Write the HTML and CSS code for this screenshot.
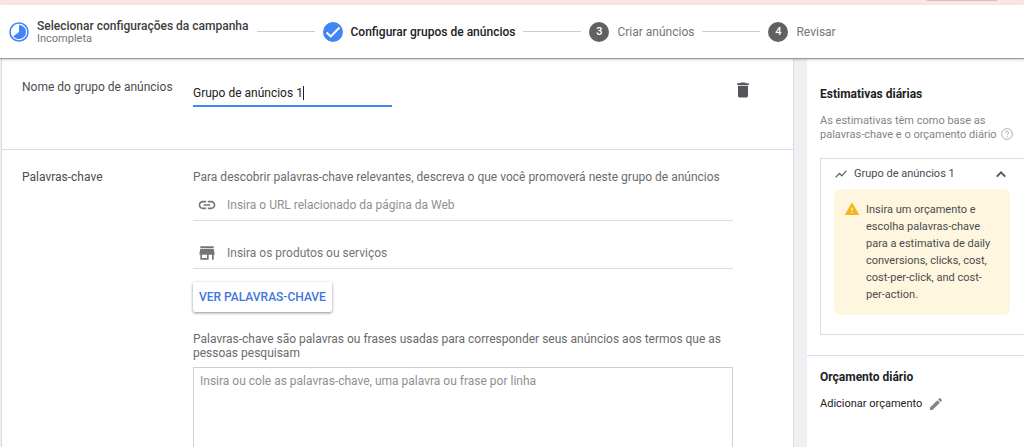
FILE: index.html
```html
<!DOCTYPE html>
<html lang="pt-BR">
<head>
  <meta charset="UTF-8" />
  <meta name="viewport" content="width=device-width, initial-scale=1.0"/>
  <title>Configurar grupos de anúncios</title>
  <link rel="stylesheet" href="styles.css">
</head>
<body>
  <div class="notice-bar"><span class="notice-action"></span></div>

  <header class="stepper">
    <div class="step">
      <svg class="step-icon" viewBox="0 0 20 20">
        <circle cx="10" cy="10" r="9" fill="none" stroke="#4285f4" stroke-width="1.6"/>
        <path d="M10 3a7 7 0 1 1-5.6 11.2L10 10z" fill="#4285f4"/>
      </svg>
      <div class="step-text">
        <strong class="step-title">Selecionar configurações da campanha</strong>
        <span class="step-status">Incompleta</span>
      </div>
    </div>
    <span class="step-line"></span>
    <div class="step">
      <svg class="step-icon" viewBox="0 0 20 20">
        <circle cx="10" cy="10" r="10" fill="#4285f4"/>
        <path d="M3.500 10.400l4.300 4 8.700-8.900" fill="none" stroke="#fff" stroke-width="2"/>
      </svg>
      <strong class="step-title current">Configurar grupos de anúncios</strong>
    </div>
    <span class="step-line"></span>
    <div class="step">
      <span class="step-icon step-number">3</span>
      <span class="step-title pending">Criar anúncios</span>
    </div>
    <span class="step-line"></span>
    <div class="step">
      <span class="step-icon step-number">4</span>
      <span class="step-title pending">Revisar</span>
    </div>
  </header>

  <div class="container">
    <main class="panel">
      <section class="row name-row">
        <label class="row-label" for="groupName">Nome do grupo de anúncios</label>
        <input class="group-name" type="text" id="groupName" value="Grupo de anúncios 1" />
        <button class="icon-button" type="button" aria-label="Excluir">
          <svg width="20" height="20" viewBox="0 0 24 24" fill="#55565b"><path d="M6 19c0 1.100.9 2 2 2h8c1.100 0 2-.9 2-2V7H6v12zM19 4h-3.500l-1-1h-5l-1 1H5v2h14V4z"/></svg>
        </button>
      </section>

      <section class="row keywords-row">
        <h2 class="row-label">Palavras-chave</h2>
        <div class="keywords">
          <p class="hint">Para descobrir palavras-chave relevantes, descreva o que você promoverá neste grupo de anúncios</p>
          <label class="field">
            <svg width="20" height="20" viewBox="0 0 24 24" fill="#757575"><path d="M3.900 12c0-1.710 1.390-3.100 3.100-3.100h4V7H7c-2.760 0-5 2.240-5 5s2.240 5 5 5h4v-1.900H7c-1.710 0-3.100-1.390-3.100-3.100zM8 13h8v-2H8v2zm9-6h-4v1.900h4c1.710 0 3.100 1.390 3.100 3.100s-1.390 3.100-3.100 3.100h-4V17h4c2.760 0 5-2.240 5-5s-2.240-5-5-5z"/></svg>
            <input class="light" type="text" placeholder="Insira o URL relacionado da página da Web" />
          </label>
          <label class="field">
            <svg width="20" height="20" viewBox="0 0 24 24" fill="#757575"><path d="M20 4H4v2h16V4zm1 10v-2l-1-5H4l-1 5v2h1v6h10v-6h4v6h2v-6h1zm-9 4H6v-4h6v4z"/></svg>
            <input type="text" placeholder="Insira os produtos ou serviços" />
          </label>
          <button class="keywords-button" type="button">VER PALAVRAS-CHAVE</button>
          <label class="hint" for="keywordList">Palavras-chave são palavras ou frases usadas para corresponder seus anúncios aos termos que as pessoas pesquisam</label>
          <textarea id="keywordList" placeholder="Insira ou cole as palavras-chave, uma palavra ou frase por linha"></textarea>
        </div>
      </section>
    </main>

    <aside class="sidebar">
      <section class="estimates">
        <h3>Estimativas diárias</h3>
        <p class="estimates-text">As estimativas têm como base as palavras-chave e o orçamento diário
          <svg class="help" width="12" height="12" viewBox="0 0 12 12" fill="none" stroke="#9e9e9e"><circle cx="6" cy="6" r="5.400" stroke-width=".8"/><path d="M4.400 4.800c0-2.200 3.200-2.100 3.200-.1 0 1.200-1.600 1.200-1.600 2.500M6 8.200v1" stroke-width=".9"/></svg>
        </p>
        <div class="card">
          <button class="card-header" type="button">
            <svg width="14" height="14" viewBox="0 0 24 24" fill="#55565b"><path d="M3.500 18.500l6-6 4 4L22 6.900l-1.400-1.400-7.100 8-4-4L2 17z"/></svg>
            <span>Grupo de anúncios 1</span>
            <svg class="chevron" width="18" height="18" viewBox="0 0 24 24" fill="#55565b"><path d="M12 8l-6.500 6.500 1.800 1.800 4.700-4.700 4.700 4.700 1.800-1.800z"/></svg>
          </button>
          <div class="warning">
            <svg width="16" height="16" viewBox="0 0 24 24" fill="#f4b61a"><path d="M1 21h22L12 2 1 21zm12-3h-2v-2h2v2zm0-4h-2v-4h2v4z"/></svg>
            <p>Insira um orçamento e escolha palavras-chave para a estimativa de daily conversions, clicks, cost, cost-per-click, and cost-per-action.</p>
          </div>
        </div>
      </section>
      <section class="budget">
        <h3>Orçamento diário</h3>
        <button class="budget-button" type="button">
          <span>Adicionar orçamento</span>
          <svg width="16" height="16" viewBox="0 0 24 24" fill="#80868b"><path d="M3 17.250V21h3.750L17.810 9.940l-3.750-3.750L3 17.250zM20.710 7.040c.39-.39.39-1.020 0-1.410l-2.340-2.340c-.39-.39-1.020-.39-1.410 0l-1.830 1.830 3.750 3.750 1.830-1.830z"/></svg>
        </button>
      </section>
    </aside>
  </div>
</body>
</html>
```
FILE: styles.css
```css
* {
  box-sizing: border-box;
}
body {
  display: flex;
  flex-direction: column;
  height: 100vh;
  margin: 0;
  overflow: hidden;
  font-family: Roboto, sans-serif;
  font-size: 12px;
  line-height: 14px;
  color: #4a4c50;
  background: #eef1f4;
}
h2, h3, p {
  margin: 0;
}
input, textarea, button {
  font: inherit;
  color: inherit;
  border: 0;
  padding: 0;
  background: none;
}
svg {
  flex: none;
}

/* top notice and steps */
.notice-bar {
  display: flex;
  justify-content: flex-end;
  flex: none;
  height: 5px;
  padding-right: 27px;
  background: #fce4e1;
}
.notice-action {
  width: 70px;
  height: 1px;
  background: #d5bfbd;
}
.stepper {
  display: flex;
  align-items: center;
  flex: none;
  height: 54px;
  padding: 0 9px;
  background: #fff;
  border-bottom: 1px solid #9a9a9a;
  box-shadow: 0 1px 2px rgba(0, 0, 0, 0.2);
  z-index: 1;
}
.step {
  display: flex;
  align-items: center;
  gap: 8px;
}
.step-icon {
  width: 20px;
  height: 20px;
}
.step-number {
  border-radius: 50%;
  background: #616161;
  color: #fff;
  font-size: 11px;
  font-weight: 500;
  line-height: 20px;
  text-align: center;
}
.step-text {
  display: flex;
  flex-direction: column;
}
.step-title {
  font-weight: 500;
  color: #3c4043;
}
.step-title.current {
  color: #202124;
}
.step-title.pending {
  font-weight: 400;
  color: #757575;
}
.step-status {
  font-size: 11px;
  line-height: 12px;
  color: #757575;
}
.step-line {
  width: 58px;
  height: 1px;
  margin: 0 8px;
  background: #ccc;
}

/* columns */
.container {
  display: flex;
  flex: 1;
  gap: 14px;
  min-height: 0;
  padding-left: 2px;
}
.panel {
  flex: 1;
  overflow: hidden;
  background: #fff;
  box-shadow: 0 0 0 1px #d9dcdf;
}
.sidebar {
  flex: none;
  width: 217px;
  overflow: hidden;
  background: #fff;
}

/* form */
.row {
  display: flex;
  padding-left: 20px;
}
.row-label {
  width: 171px;
  font-size: 12px;
  font-weight: 400;
}
.name-row {
  align-items: flex-start;
  height: 91px;
  padding-top: 21px;
  border-bottom: 1px solid #dadce0;
}
/* caret sits right after the value */
.group-name {
  width: 199px;
  height: 27px;
  border-bottom: 2px solid #4285f4;
  color: #202124;
  outline: none;
  background: linear-gradient(#202124, #202124) 110px 6px / 1px 14px no-repeat;
}
.icon-button {
  display: flex;
  margin: 0 40px 0 auto;
}
.keywords-row {
  padding-top: 20px;
}
.keywords {
  display: flex;
  flex: 1;
  flex-direction: column;
  align-items: flex-start;
  margin-right: 60px;
}
.hint {
  color: #6b6b6b;
}
.field {
  display: flex;
  align-items: center;
  gap: 10px;
  width: 100%;
  height: 28px;
  margin-bottom: 20px;
  padding: 0 0 4px 4px;
  border-bottom: 1px solid #dadce0;
}
.hint + .field {
  margin-top: 9px;
}
.field input {
  flex: 1;
  outline: none;
}
::placeholder {
  color: #757575;
  opacity: 1;
}
.light::placeholder, textarea::placeholder {
  color: #909090;
}
.keywords-button {
  height: 30px;
  margin: -7px 0 20px;
  padding: 0 6px;
  border-radius: 2px;
  background: #fff;
  box-shadow: 0 1px 3px rgba(0, 0, 0, 0.45);
  color: #3f76e0;
  font-weight: 500;
}
textarea {
  width: 100%;
  height: 140px;
  margin-top: 7px;
  padding: 6px;
  border: 1px solid #d0d0d0;
  resize: none;
  outline: none;
}

/* estimates */
h3 {
  font-size: 12px;
  font-weight: 700;
  color: #202124;
}
.estimates {
  padding: 28px 0 20px 13px;
  border-bottom: 1px solid #dadce0;
}
.estimates-text {
  margin-top: 13px;
  font-size: 11px;
  color: #80868b;
}
.help {
  margin-left: 2px;
  vertical-align: -2px;
}
.card {
  margin-top: 16px;
  padding: 0 14px 19px 13px;
  border: 1px solid #dadce0;
  border-right: 0;
}
.card-header {
  display: flex;
  align-items: center;
  gap: 6px;
  width: 100%;
  height: 30px;
  font-size: 11px;
}
.chevron {
  margin-left: auto;
}
.warning {
  display: flex;
  gap: 6px;
  padding: 12px 10px;
  border-radius: 6px;
  background: #fef6df;
  font-size: 11px;
  line-height: 17px;
}
.budget {
  padding: 14px 13px;
}
.budget-button {
  display: flex;
  align-items: center;
  gap: 6px;
  margin-top: 12px;
  font-size: 11px;
  color: #202124;
}
```
